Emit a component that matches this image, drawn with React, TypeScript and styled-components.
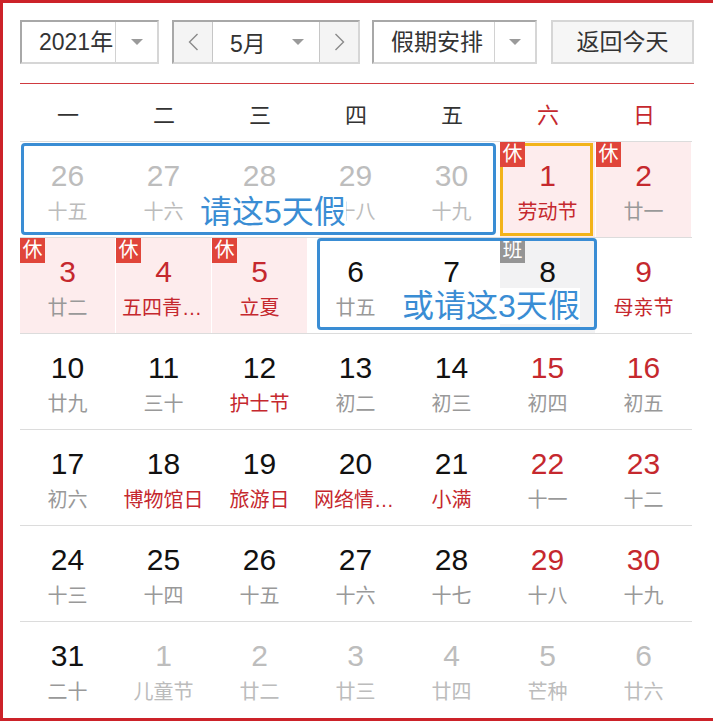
import React from 'react';
import styled, { createGlobalStyle } from 'styled-components';

const GlobalStyle = createGlobalStyle`
  html, body { margin: 0; padding: 0; background: #fff; overflow: hidden; }
  body { font-family: "Liberation Sans", "Noto Sans CJK SC", sans-serif; }
`;

const RED = '#c5282e';
const BLUE = '#3a8dd4';

const Frame = styled.div`
  box-sizing: border-box;
  width: 713px;
  height: 721px;
  border: 3px solid #cc2229;
  border-right: none;
  padding: 17px 0 0 17px;
  overflow: hidden;
`;

const Toolbar = styled.div`
  display: flex;
  align-items: stretch;
  height: 44px;
`;

const Box = styled.div<{ $w: number; $gap: number }>`
  box-sizing: border-box;
  display: flex;
  width: ${p => p.$w}px;
  height: 44px;
  margin-right: ${p => p.$gap}px;
  border: 2px solid;
  border-color: #a8a8a8 #d6d6d6 #d6d6d6 #a8a8a8;
  background: #fff;
  color: #333;
`;

const Label = styled.div<{ $pad: number }>`
  flex: 1;
  display: flex;
  align-items: center;
  padding-left: ${p => p.$pad}px;
  font-size: 23px;
  line-height: 40px;
  white-space: nowrap;
`;

const Drop = styled.div<{ $w: number }>`
  box-sizing: border-box;
  width: ${p => p.$w}px;
  border-left: 1px solid #d2d2d2;
  display: flex;
  align-items: center;
  justify-content: center;
`;

const Caret = styled.span`
  width: 0;
  height: 0;
  border-left: 6px solid transparent;
  border-right: 6px solid transparent;
  border-top: 6px solid #9a9a9a;
`;

const ArrowBtn = styled.div<{ $side: 'left' | 'right' }>`
  box-sizing: border-box;
  width: 39px;
  background: #f4f4f4;
  display: flex;
  align-items: center;
  justify-content: center;
  ${p => (p.$side === 'left' ? 'border-right: 1px solid #c6c6c6;' : 'border-left: 1px solid #c6c6c6;')}
`;

const MonthPart = styled.div`
  flex: 1;
  display: flex;
  align-items: center;
  justify-content: space-between;
  padding: 0 15px 0 17px;
  font-size: 23px;
`;

const TodayButton = styled.div`
  box-sizing: border-box;
  width: 143px;
  height: 44px;
  border: 2px solid #d6d6d6;
  background: #f6f6f6;
  color: #333;
  font-size: 23px;
  line-height: 40px;
  text-align: center;
`;

const Divider = styled.div`
  width: 674px;
  height: 1px;
  margin-top: 19px;
  background: #d03a40;
`;

const Calendar = styled.div`
  position: relative;
  width: 672px;
`;

const HeaderRow = styled.div`
  display: grid;
  grid-template-columns: repeat(7, 96px);
  height: 57px;
  align-items: center;
  border-bottom: 1px solid #dcdcdc;
`;

const WeekdayName = styled.div<{ $red: boolean }>`
  text-align: center;
  font-size: 22px;
  color: ${p => (p.$red ? RED : '#333')};
`;

const WeekRow = styled.div<{ $last: boolean }>`
  box-sizing: border-box;
  display: grid;
  grid-template-columns: repeat(7, 96px);
  height: 96px;
  border-bottom: ${p => (p.$last ? 'none' : '1px solid #dcdcdc')};
`;

const Cell = styled.div<{ $bg: 'none' | 'holiday' | 'work'; $today: boolean }>`
  position: relative;
  box-sizing: border-box;
  padding-top: 16px;
  text-align: center;
  border-right: 1px solid transparent;
  background-clip: padding-box;
  background-color: ${p => (p.$bg === 'holiday' ? '#fdeced' : p.$bg === 'work' ? '#f2f2f3' : 'transparent')};
  ${p =>
    p.$today
      ? `&::after {
          content: '';
          position: absolute;
          top: 1px; left: 0; right: 2px; bottom: 1px;
          border: 3px solid #f2b31a;
        }`
      : ''}
`;

const DayNum = styled.div<{ $tone: 'normal' | 'red' | 'other' }>`
  font-size: 30px;
  line-height: 36px;
  color: ${p => (p.$tone === 'red' ? RED : p.$tone === 'other' ? '#bdbdbd' : '#111')};
`;

const Sub = styled.div<{ $tone: 'grey' | 'red' | 'other' }>`
  margin-top: 4px;
  padding: 0 6px;
  font-size: 20px;
  line-height: 28px;
  white-space: nowrap;
  overflow: hidden;
  text-overflow: ellipsis;
  color: ${p => (p.$tone === 'red' ? RED : p.$tone === 'other' ? '#bcbcbc' : '#999')};
`;

const Badge = styled.span<{ $kind: '休' | '班' }>`
  position: absolute;
  top: 0;
  left: 0;
  z-index: 2;
  width: 25px;
  height: 25px;
  font-size: 20px;
  line-height: 25px;
  text-align: center;
  color: #fff;
  background: ${p => (p.$kind === '休' ? '#e0453a' : '#959595')};
`;

const Highlight = styled.div<{ $left: number; $top: number; $w: number; $h: number }>`
  position: absolute;
  box-sizing: border-box;
  left: ${p => p.$left}px;
  top: ${p => p.$top}px;
  width: ${p => p.$w}px;
  height: ${p => p.$h}px;
  border: 3px solid ${BLUE};
  border-radius: 4px;
  pointer-events: none;
  z-index: 3;
`;

const Note = styled.div<{ $left: number; $top: number }>`
  position: absolute;
  left: ${p => p.$left}px;
  top: ${p => p.$top}px;
  z-index: 3;
  font-size: 32px;
  line-height: 36px;
  color: ${BLUE};
  background: #fff;
  white-space: nowrap;
`;

type Day = {
  n: number;
  sub: string;
  tone?: 'normal' | 'red' | 'other';
  subTone?: 'grey' | 'red' | 'other';
  bg?: 'none' | 'holiday' | 'work';
  badge?: '休' | '班';
  today?: boolean;
};

const o = (n: number, sub: string): Day => ({ n, sub, tone: 'other', subTone: 'other' });
const d = (n: number, sub: string, extra: Partial<Day> = {}): Day => ({ n, sub, ...extra });
const wk = (n: number, sub: string, extra: Partial<Day> = {}): Day => ({ n, sub, tone: 'red', ...extra });
const hol = (n: number, sub: string, subRed = false, extra: Partial<Day> = {}): Day => ({
  n,
  sub,
  tone: 'red',
  subTone: subRed ? 'red' : 'grey',
  bg: 'holiday',
  badge: '休',
  ...extra,
});

const weeks: Day[][] = [
  [o(26, '十五'), o(27, '十六'), o(28, '十七'), o(29, '十八'), o(30, '十九'), hol(1, '劳动节', true, { today: true }), hol(2, '廿一')],
  [hol(3, '廿二'), hol(4, '五四青年节', true), hol(5, '立夏', true), d(6, '廿五'), d(7, '廿六'), d(8, '廿七', { bg: 'work', badge: '班' }), wk(9, '母亲节', { subTone: 'red' })],
  [d(10, '廿九'), d(11, '三十'), d(12, '护士节', { subTone: 'red' }), d(13, '初二'), d(14, '初三'), wk(15, '初四'), wk(16, '初五')],
  [d(17, '初六'), d(18, '博物馆日', { subTone: 'red' }), d(19, '旅游日', { subTone: 'red' }), d(20, '网络情人节', { subTone: 'red' }), d(21, '小满', { subTone: 'red' }), wk(22, '十一'), wk(23, '十二')],
  [d(24, '十三'), d(25, '十四'), d(26, '十五'), d(27, '十六'), d(28, '十七'), wk(29, '十八'), wk(30, '十九')],
  [d(31, '二十'), o(1, '儿童节'), o(2, '廿二'), o(3, '廿三'), o(4, '廿四'), o(5, '芒种'), o(6, '廿六')],
];

const weekdays = ['一', '二', '三', '四', '五', '六', '日'];

const Chevron = ({ dir }: { dir: 'left' | 'right' }) => (
  <svg width="11" height="18" viewBox="0 0 11 18">
    <polyline
      points={dir === 'left' ? '9.5,1 1.5,9 9.5,17' : '1.5,1 9.5,9 1.5,17'}
      fill="none"
      stroke="#8a8a8a"
      strokeWidth="1.4"
    />
  </svg>
);

export default function App() {
  return (
    <>
      <GlobalStyle />
      <Frame>
        <Toolbar>
          <Box $w={139} $gap={13}>
            <Label $pad={17}>2021年</Label>
            <Drop $w={42}>
              <Caret />
            </Drop>
          </Box>
          <Box $w={188} $gap={12}>
            <ArrowBtn $side="left">
              <Chevron dir="left" />
            </ArrowBtn>
            <MonthPart>
              <span>5月</span>
              <Caret />
            </MonthPart>
            <ArrowBtn $side="right">
              <Chevron dir="right" />
            </ArrowBtn>
          </Box>
          <Box $w={165} $gap={14}>
            <Label $pad={17}>假期安排</Label>
            <Drop $w={41}>
              <Caret />
            </Drop>
          </Box>
          <TodayButton>返回今天</TodayButton>
        </Toolbar>
        <Divider />
        <Calendar>
          <HeaderRow>
            {weekdays.map((w, i) => (
              <WeekdayName key={w} $red={i >= 5}>
                {w}
              </WeekdayName>
            ))}
          </HeaderRow>
          {weeks.map((week, wi) => (
            <WeekRow key={wi} $last={wi === weeks.length - 1}>
              {week.map((day, di) => (
                <Cell key={di} $bg={day.bg ?? 'none'} $today={!!day.today}>
                  {day.badge && <Badge $kind={day.badge}>{day.badge}</Badge>}
                  <DayNum $tone={day.tone ?? 'normal'}>{day.n}</DayNum>
                  <Sub $tone={day.subTone ?? 'grey'}>{day.sub}</Sub>
                </Cell>
              ))}
            </WeekRow>
          ))}
          <Highlight $left={1} $top={59} $w={475} $h={92} />
          <Note $left={180} $top={110}>请这5天假</Note>
          <Highlight $left={297} $top={154} $w={280} $h={92} />
          <Note $left={382} $top={204}>或请这3天假</Note>
        </Calendar>
      </Frame>
    </>
  );
}
